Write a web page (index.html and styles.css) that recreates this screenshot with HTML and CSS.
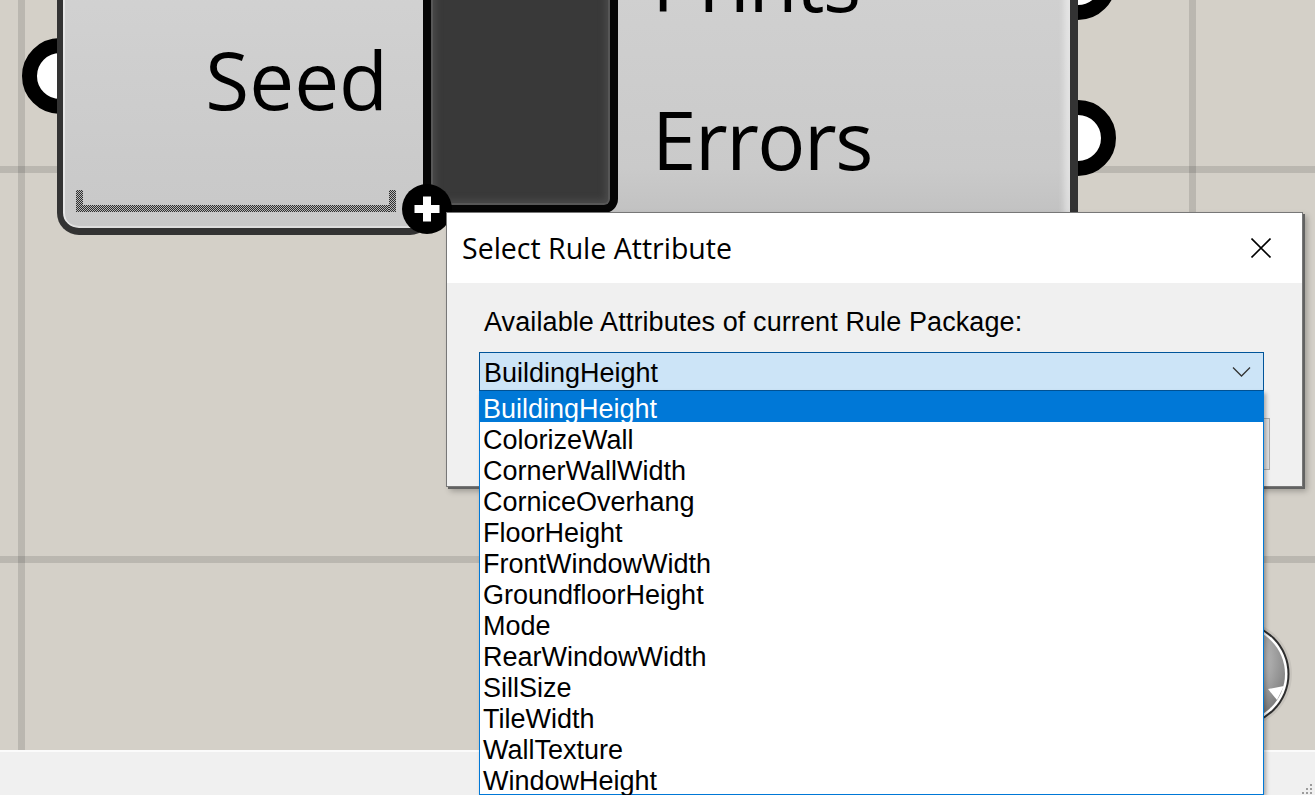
FILE: index.html
```html
<!DOCTYPE html>
<html lang="en">
<head>
<meta charset="utf-8">
<title>Select Rule Attribute</title>
<link rel="stylesheet" href="styles.css">
</head>
<body>
<div class="app">
  <main class="canvas">
    <span class="grip grip-in"></span>
    <span class="grip grip-out grip-prints"></span>
    <span class="grip grip-out grip-errors"></span>

    <div class="component">
      <div class="panel panel-in">
        <div class="param param-seed">Seed</div>
        <div class="bracket"><i></i><b></b><i></i></div>
      </div>
      <div class="panel panel-core"></div>
      <div class="panel panel-out">
        <div class="param">Prints</div>
        <div class="param">Errors</div>
      </div>
    </div>

    <svg class="zui-plus" width="50" height="50" viewBox="0 0 50 50" aria-hidden="true">
      <circle cx="25" cy="25" r="25" fill="#000"/>
      <path d="M12.5 25H37.5M25 12.5V37.5" stroke="#fff" stroke-width="8"/>
    </svg>

    <svg class="widget" width="120" height="120" viewBox="0 0 120 120" aria-hidden="true">
      <defs>
        <radialGradient id="wg" cx="0.38" cy="0.35" r="0.7">
          <stop offset="0" stop-color="#e2e2e2"/>
          <stop offset="0.6" stop-color="#b4b4b4"/>
          <stop offset="1" stop-color="#7c7c7c"/>
        </radialGradient>
      </defs>
      <circle cx="58" cy="58" r="54" fill="rgba(0,0,0,0.06)"/>
      <circle cx="58" cy="58" r="51.5" fill="#2e2e2e"/>
      <circle cx="58" cy="58" r="49.5" fill="#ffffff"/>
      <circle cx="58" cy="58" r="47" fill="url(#wg)"/>
      <polygon points="88,73 104,70 97,84" fill="#ffffff"/>
    </svg>
  </main>

  <footer class="statusbar">
    <svg class="resize-grip" width="12" height="12" viewBox="0 0 12 12" aria-hidden="true">
      <rect x="9" y="1" width="2" height="2"/>
      <rect x="5" y="5" width="2" height="2"/>
      <rect x="9" y="5" width="2" height="2"/>
      <rect x="1" y="9" width="2" height="2"/>
      <rect x="5" y="9" width="2" height="2"/>
      <rect x="9" y="9" width="2" height="2"/>
    </svg>
  </footer>

  <section class="dialog">
    <header class="dialog-title">
      <h1 class="dialog-caption">Select Rule Attribute</h1>
      <svg class="close-x" width="20" height="20" viewBox="0 0 20 20" aria-hidden="true">
        <path d="M0.5 0.5L19.5 19.5M19.5 0.5L0.5 19.5" stroke="#000" stroke-width="1.6"/>
      </svg>
    </header>
    <div class="dialog-body">
      <p class="field-label">Available Attributes of current Rule Package:</p>
      <div class="combo">
        <span class="combo-value">BuildingHeight</span>
        <svg class="chevron" width="19" height="11" viewBox="0 0 19 11" aria-hidden="true">
          <path d="M1 1.5L9.5 10L18 1.5" fill="none" stroke="#333" stroke-width="1.3"/>
        </svg>
        <ul class="dropdown">
          <li class="option selected">BuildingHeight</li>
          <li class="option">ColorizeWall</li>
          <li class="option">CornerWallWidth</li>
          <li class="option">CorniceOverhang</li>
          <li class="option">FloorHeight</li>
          <li class="option">FrontWindowWidth</li>
          <li class="option">GroundfloorHeight</li>
          <li class="option">Mode</li>
          <li class="option">RearWindowWidth</li>
          <li class="option">SillSize</li>
          <li class="option">TileWidth</li>
          <li class="option">WallTexture</li>
          <li class="option">WindowHeight</li>
        </ul>
      </div>
      <div class="button-row">
        <button class="btn" type="button">OK</button>
      </div>
    </div>
  </section>
</div>
</body>
</html>
```

FILE: styles.css
```css
* {
  box-sizing: border-box;
}

html, body {
  margin: 0;
  padding: 0;
  background: #d4d0c8;
}

.app {
  position: relative;
  width: 1315px;
  height: 795px;
  overflow: hidden;
  display: flex;
  flex-direction: column;
}

/* ---------- canvas ---------- */
.canvas {
  position: relative;
  flex: 0 0 750px;
  background-color: #d4d0c8;
  background-image:
    linear-gradient(to right,
      transparent 18px, rgba(0,0,0,0.12) 18px, rgba(0,0,0,0.12) 25px, transparent 25px,
      transparent 1189px, rgba(0,0,0,0.12) 1189px, rgba(0,0,0,0.12) 1196px, transparent 1196px),
    linear-gradient(to bottom,
      transparent 166px, rgba(0,0,0,0.12) 166px, rgba(0,0,0,0.12) 173px, transparent 173px,
      transparent 556px, rgba(0,0,0,0.12) 556px, rgba(0,0,0,0.12) 563px, transparent 563px);
}

.grip {
  position: absolute;
  width: 76px;
  height: 76px;
  border-radius: 50%;
  border: 15px solid #000;
  background: #fff;
}
.grip-in { left: 22px; top: 38px; }
.grip-prints { left: 1040px; top: -56px; }
.grip-errors { left: 1040px; top: 100px; }

.component {
  position: absolute;
  left: 57px;
  top: -120px;
  display: flex;
  align-items: flex-start;
}

.panel {
  position: relative;
  flex: none;
}

.param {
  font-family: "Open Sans", "Noto Sans", sans-serif;
  font-size: 80px;
  line-height: 158px;
  height: 158px;
  letter-spacing: -1.5px;
  color: #000;
  white-space: nowrap;
}
.param-seed {
  letter-spacing: 0;
}

.panel-in {
  z-index: 1;
  width: 375px;
  height: 355px;
  display: flex;
  flex-direction: column;
  padding: 120px 38px 16px 0;
  text-align: right;
  border: 6px solid #333;
  border-top: 0;
  border-bottom-width: 7px;
  border-radius: 0 0 22px 22px;
  background: linear-gradient(to bottom, #d6d6d6, #c8c8c8);
  box-shadow: inset 2px 0 0 #e6e6e6, inset 0 -2px 0 #dedede;
}

.bracket {
  margin: auto 0 0 13px;
  width: 320px;
  height: 22px;
  display: flex;
}
.bracket i,
.bracket b {
  display: block;
  background-color: #8a8a8a;
  background-image: repeating-conic-gradient(#2e2e2e 0 25%, #b8b8b8 0 50%);
  background-size: 2px 2px;
}
.bracket i {
  width: 7px;
  height: 22px;
}
.bracket b {
  flex: 1;
  height: 7px;
  align-self: flex-end;
}

.panel-core {
  z-index: 2;
  margin-left: -9px;
  width: 195px;
  height: 333px;
  background: #393939;
  border: 8px solid #050505;
  border-top: 0;
  border-radius: 0 0 14px 14px;
  box-shadow: inset 0 0 0 2px #575757, inset 0 0 6px 5px #4a4a4a;
}

.panel-out {
  z-index: 1;
  margin-left: -8px;
  width: 468px;
  height: 360px;
  padding: 22px 0 0 42px;
  border-right: 8px solid #333;
  background: linear-gradient(to bottom, #d4d4d4 0%, #cacaca 80%, #bdbdbd 100%);
  box-shadow: inset -12px 0 6px -6px rgba(255,255,255,0.45);
}

.zui-plus {
  position: absolute;
  left: 402px;
  top: 184px;
  z-index: 3;
}

.widget {
  position: absolute;
  left: 1180px;
  top: 616px;
}

/* ---------- status bar ---------- */
.statusbar {
  position: relative;
  flex: 1;
  background: #f0f0f0;
  border-top: 2px solid #fbfbfb;
  display: flex;
  justify-content: flex-end;
  align-items: flex-end;
  padding: 0 2px 0 0;
}
.resize-grip {
  fill: #9c9c9c;
}

/* ---------- dialog ---------- */
.dialog {
  position: absolute;
  z-index: 10;
  left: 446px;
  top: 212px;
  width: 857px;
  height: 275px;
  display: flex;
  flex-direction: column;
  background: #f0f0f0;
  border: 1px solid #777;
  box-shadow: 2px 2px 0 #626262, 4px 4px 6px rgba(0,0,0,0.28);
}

.dialog-title {
  flex: 0 0 70px;
  background: #fff;
  display: flex;
  align-items: center;
  justify-content: space-between;
  padding: 0 31px 0 15px;
}
.dialog-caption {
  margin: 0;
  font-family: "Open Sans", "Noto Sans", sans-serif;
  font-weight: 400;
  font-size: 28.5px;
  color: #000;
}

.dialog-body {
  flex: 1;
  display: flex;
  flex-direction: column;
  padding: 24px 32px 0 32px;
  font-family: "Liberation Sans", Arial, sans-serif;
  color: #000;
}

.field-label {
  margin: 0 0 15px 5px;
  font-size: 27px;
  line-height: 30px;
  letter-spacing: 0.1px;
}

.combo {
  position: relative;
  width: 785px;
  height: 39px;
  display: flex;
  align-items: center;
  justify-content: space-between;
  padding: 4px 12px 0 4px;
  background: #cce4f7;
  border: 1px solid #005499;
  font-size: 27px;
  line-height: 33px;
}
.combo-value {
  white-space: nowrap;
}
.chevron {
  margin-top: -5px;
}

.dropdown {
  position: absolute;
  left: -1px;
  top: 38px;
  width: 785px;
  margin: 0;
  padding: 0;
  list-style: none;
  background: #fff;
  border: 1px solid #0078d7;
  border-top: 0;
  box-shadow: 2px 2px 4px rgba(0,0,0,0.3);
}
.option {
  height: 31px;
  line-height: 25px;
  padding: 6px 0 0 3px;
  font-size: 27px;
  color: #000;
  white-space: nowrap;
}
.option.selected {
  background: #0078d7;
  color: #fff;
}

.button-row {
  display: flex;
  justify-content: flex-end;
  margin-top: 27px;
}
.btn {
  width: 170px;
  height: 52px;
  background: #e1e1e1;
  border: 1px solid #adadad;
  font-family: "Liberation Sans", Arial, sans-serif;
  font-size: 24px;
  color: #000;
}
```
